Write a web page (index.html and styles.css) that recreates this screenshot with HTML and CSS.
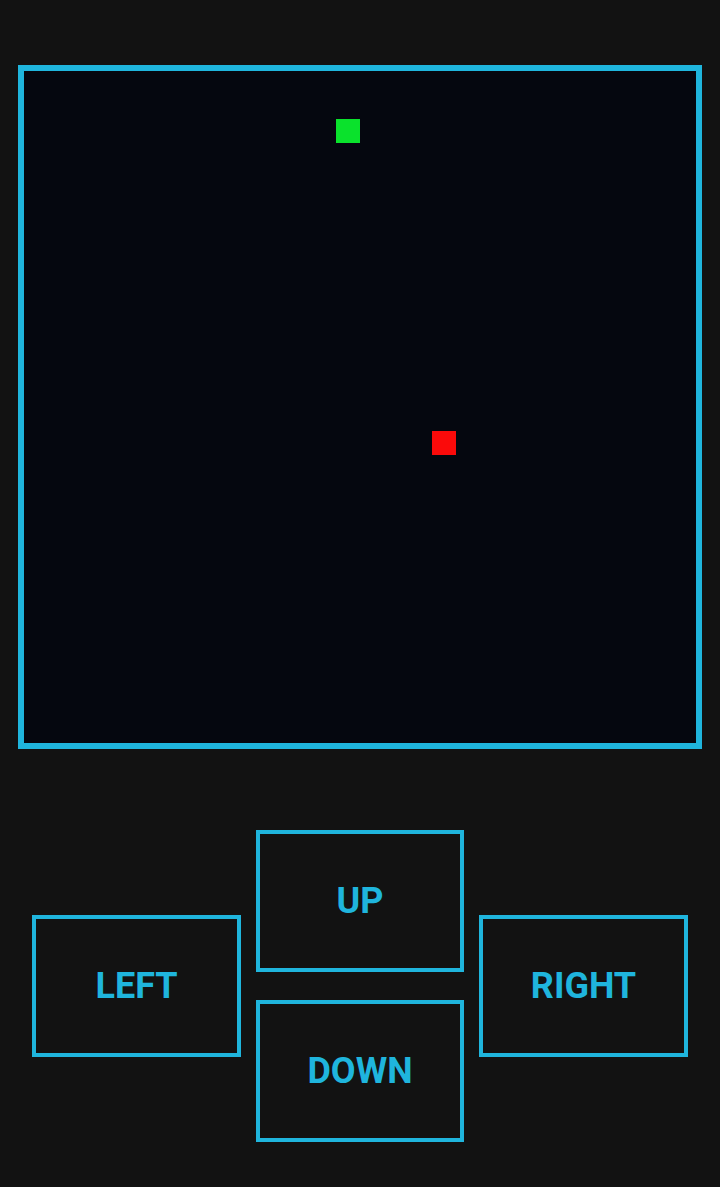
FILE: index.html
```html
<!DOCTYPE html>
<html lang="en">
<head>
<meta charset="utf-8">
<title>Snake</title>
<link rel="stylesheet" href="styles.css">
</head>
<body>
<main class="app">
  <div class="board">
    <div class="cell snake" style="grid-column: 14; grid-row: 3;"></div>
    <div class="cell food" style="grid-column: 18; grid-row: 16;"></div>
  </div>
  <div class="controls">
    <button class="btn btn-up">UP</button>
    <button class="btn btn-left">LEFT</button>
    <button class="btn btn-right">RIGHT</button>
    <button class="btn btn-down">DOWN</button>
  </div>
</main>
</body>
</html>
```

FILE: styles.css
```css
html, body {
  margin: 0;
  padding: 0;
  background: #121212;
}
body {
  width: 720px;
  height: 1187px;
  overflow: hidden;
  font-family: Roboto, "Liberation Sans", sans-serif;
}
.app {
  display: flex;
  flex-direction: column;
  align-items: center;
  padding-top: 65px;
}
.board {
  width: 672px;
  height: 672px;
  border: 6px solid #1fb5dd;
  background: #05070f;
  display: grid;
  grid-template-columns: repeat(28, 24px);
  grid-template-rows: repeat(28, 24px);
}
.cell {
  width: 24px;
  height: 24px;
}
.snake { background: #0ae22c; }
.food { background: #fb0a0a; }
.controls {
  margin-top: 81px;
  display: grid;
  grid-template-columns: 209px 208px 209px;
  grid-template-rows: 142px 142px;
  column-gap: 15px;
  row-gap: 28px;
}
.btn {
  box-sizing: border-box;
  height: 142px;
  background: #121212;
  border: 4px solid #1fb5dd;
  color: #1fb5dd;
  font-family: Roboto, "Liberation Sans", sans-serif;
  font-weight: 700;
  font-size: 36px;
  padding: 0;
  margin: 0;
  display: flex;
  align-items: center;
  justify-content: center;
}
.btn-up { grid-column: 2; grid-row: 1; }
.btn-down { grid-column: 2; grid-row: 2; }
.btn-left { grid-column: 1; grid-row: 1 / span 2; align-self: center; }
.btn-right { grid-column: 3; grid-row: 1 / span 2; align-self: center; }
```
